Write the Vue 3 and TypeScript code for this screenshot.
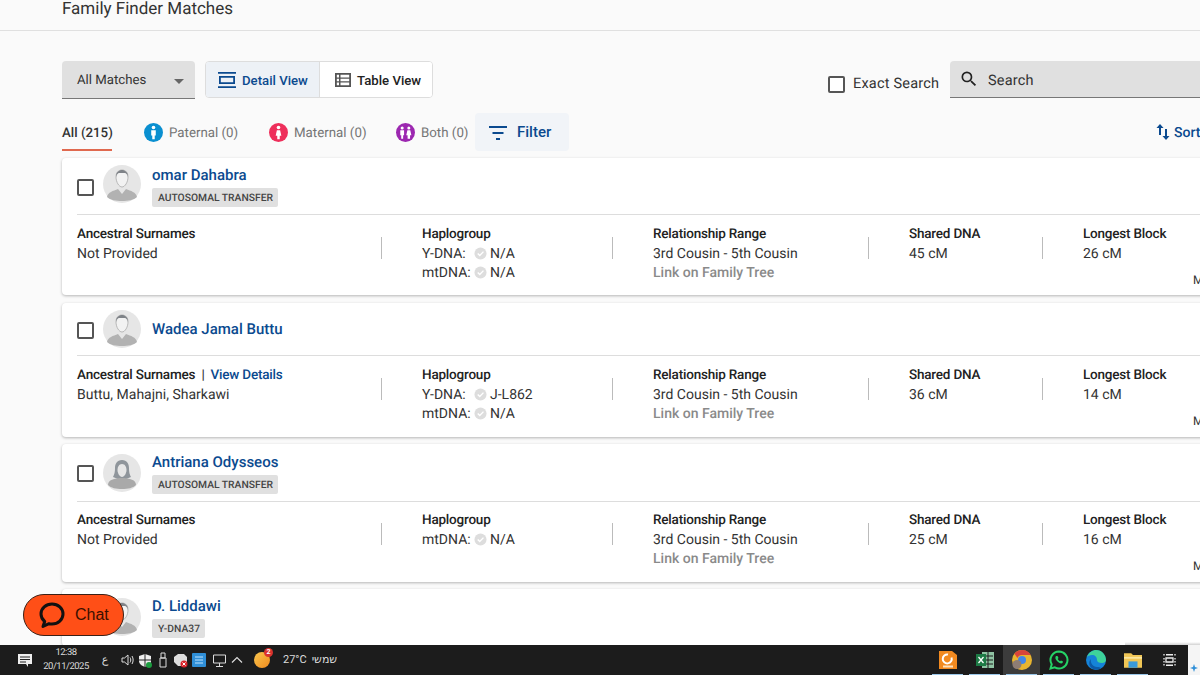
<template>
  <div class="page">
    <div class="main">
      <header class="title-bar">
        <h1>Family Finder Matches</h1>
      </header>

      <section class="toolbar">
        <div class="select">
          <span>All Matches</span>
          <i class="caret"></i>
        </div>
        <div class="view-toggle">
          <button class="view-btn active">
            <svg width="20" height="18" viewBox="0 0 20 18"><path d="M1 1h18v1.800H1zM1 15.200h18V17H1zM2 5h16v8H2zM3.800 6.800v4.400h12.400V6.800z" fill="#0b4a8f" fill-rule="evenodd" /></svg>
            Detail View
          </button>
          <button class="view-btn">
            <svg width="18" height="16" viewBox="0 0 18 16"><path d="M1 1h16v14H1zM2.800 2.800V5.500H5V2.800zM6.500 2.800V5.500h8.700V2.800zM2.800 6.800V9.300H5V6.800zM6.500 6.800V9.300h8.700V6.800zM2.800 10.600v2.600H5v-2.600zM6.500 10.600v2.600h8.700v-2.600z" fill="#555" fill-rule="evenodd" /></svg>
            Table View
          </button>
        </div>
        <label class="exact">
          <i class="box"></i>
          Exact Search
        </label>
        <div class="search">
          <svg width="20" height="20" viewBox="0 0 24 24"><path d="M15.500 14h-.79l-.28-.27A6.470 6.470 0 0 0 16 9.500 6.500 6.500 0 1 0 9.500 16c1.610 0 3.090-.59 4.230-1.570l.27.28v.79l5 4.990L20.490 19zm-6 0C7.010 14 5 11.990 5 9.500S7.010 5 9.500 5 14 7.010 14 9.500 11.990 14 9.500 14z" fill="#222" /></svg>
          <span>Search</span>
        </div>
      </section>

      <nav class="tabs">
        <div class="tab current">All (215)</div>
        <div class="tab">
          <svg width="19" height="19" viewBox="0 0 20 20"><circle cx="10" cy="10" r="10" fill="#0a8fd0" /><circle cx="10" cy="4.800" r="1.900" fill="#fff" /><path d="M7.600 7.500h4.800v5.700h-1.100V17H8.700v-3.800H7.600z" fill="#fff" /></svg>
          Paternal (0)
        </div>
        <div class="tab">
          <svg width="19" height="19" viewBox="0 0 20 20"><circle cx="10" cy="10" r="10" fill="#ee2f5b" /><circle cx="10" cy="4.800" r="1.900" fill="#fff" /><path d="M8.300 7.500h3.400l1.300 6h-1.700V17H8.700v-3.500H7z" fill="#fff" /></svg>
          Maternal (0)
        </div>
        <div class="tab">
          <svg width="19" height="19" viewBox="0 0 20 20"><circle cx="10" cy="10" r="10" fill="#9c27b0" /><circle cx="6.500" cy="5.300" r="1.600" fill="#fff" /><circle cx="13.500" cy="5.300" r="1.600" fill="#fff" /><path d="M4.500 7.500h4v5.300h-1V16.500h-2v-3.700h-1zM12 7.500h3l1.200 5.300h-1.400v3.700h-2.600v-3.700h-1.400z" fill="#fff" /></svg>
          Both (0)
        </div>
        <button class="filter">
          <svg width="20" height="14" viewBox="0 0 20 14"><path d="M1 0h18v2H1zM4.500 6h11v2h-11zM8 12h4v2H8z" fill="#0b4a8f" /></svg>
          Filter
        </button>
        <div class="sort">
          <svg width="16" height="18" viewBox="0 0 16 18"><path d="M5 1 1.500 5H4v7h2V5h2.500zM11 17l3.500-4H12V6h-2v7H7.500z" fill="#0b4a8f" /></svg>
          Sort
        </div>
      </nav>

      <section class="list">
        <article v-for="m in matches" :key="m.name" class="card" :class="m.size">
          <div class="card-head">
            <i class="box"></i>
            <svg class="avatar" width="38" height="38" viewBox="0 0 38 38">
              <circle cx="19" cy="19" r="19" fill="#e6e6e6" />
              <template v-if="m.female">
                <path d="M19 6c-5 0-7 4-7 8 0 5-1 7-2 9l5 2h8l5-2c-1-2-2-4-2-9 0-4-2-8-7-8z" fill="#8f959b" />
                <path d="M19 10c-3 0-4.500 3-4.500 6s2 7 4.500 7 4.500-4 4.500-7-1.500-6-4.500-6z" fill="#e6e6e6" />
                <path d="M5 31c0-5 6-7 14-7s14 2 14 7c-3 3-8 4-14 4S8 34 5 31z" fill="#a9a9a9" />
              </template>
              <template v-else>
                <path d="M19 5c-4 0-6 3-6 7 0 5 3 10 6 10s6-5 6-10c0-4-2-7-6-7z" fill="#f2f2f2" stroke="#aaa" stroke-width=".8" />
                <path d="M13 12c0-5 3-7 6-7s6 2 6 7c-1-3-2-4-3-4h-6c-1 0-2 1-3 4z" fill="#7f8388" />
                <path d="M4 32c1-5 6-6 11-8l4 5 4-5c5 2 10 3 11 8-3 3-9 4-15 4S7 35 4 32z" fill="#b2b2b2" />
              </template>
            </svg>
            <div class="who">
              <a class="name">{{ m.name }}</a>
              <span v-if="m.badge" class="badge">{{ m.badge }}</span>
            </div>
          </div>

          <div v-if="m.details" class="details">
            <div class="cell c1">
              <div class="label">
                Ancestral Surnames
                <span v-if="m.viewDetails" class="view-details"><i>|</i>View Details</span>
              </div>
              <div>{{ m.surnames }}</div>
            </div>
            <i class="sep"></i>
            <div class="cell c2">
              <div class="label">Haplogroup</div>
              <div v-for="h in m.haplo" :key="h.type" class="haplo">
                <span class="htype">{{ h.type }}:</span>
                <svg width="13" height="13" viewBox="0 0 14 14"><circle cx="7" cy="7" r="6.500" fill="#ddd" /><path d="m4 7 2.200 2.200L10.200 5" fill="none" stroke="#fff" stroke-width="1.500" /></svg>
                <span>{{ h.value }}</span>
              </div>
            </div>
            <i class="sep"></i>
            <div class="cell c3">
              <div class="label">Relationship Range</div>
              <div>3rd Cousin - 5th Cousin</div>
              <div class="tree">Link on Family Tree</div>
            </div>
            <i class="sep"></i>
            <div class="cell c4">
              <div class="label">Shared DNA</div>
              <div>{{ m.shared }}</div>
            </div>
            <i class="sep"></i>
            <div class="cell c5">
              <div class="label">Longest Block</div>
              <div>{{ m.longest }}</div>
              <div class="more">More</div>
            </div>
          </div>
        </article>
      </section>
    </div>

    <button class="chat">
      <svg width="28" height="28" viewBox="0 0 28 28"><path d="M14 3C7.900 3 3 7.500 3 13c0 3 1.400 5.600 3.700 7.500L5 25.500l6-2.800c1 .2 2 .3 3 .3 6.100 0 11-4.500 11-10S20.100 3 14 3z" fill="none" stroke="#111" stroke-width="3" stroke-linejoin="round" /></svg>
      Chat
    </button>

    <footer class="taskbar">
      <div class="tray">
        <svg class="notes" width="16" height="16" viewBox="0 0 16 16"><path d="M1 2h14v10h-4v3l-2-3H1z" fill="#eee" /><path d="M3 5h10M3 7.500h10M3 10h6" stroke="#222" stroke-width="1" /></svg>
        <div class="clock">
          <span>12:38</span>
          <span>20/11/2025</span>
        </div>
        <span class="lang">ع</span>
        <div class="tray-icons">
          <svg width="13" height="14" viewBox="0 0 13 14"><path d="M1 5h2.500L7 2v10L3.500 9H1z" fill="none" stroke="#ddd" /><path d="M9 4.500c1 1.500 1 3.500 0 5M11 3c1.500 2.500 1.500 5.500 0 8" fill="none" stroke="#ddd" /></svg>
          <svg width="14" height="15" viewBox="0 0 14 15"><path d="M7 1l6 2v5c0 3-3 5-6 6-3-1-6-3-6-6V3z" fill="#eee" /><path d="M1 7h12M7 1v13" stroke="#222" /><circle cx="11" cy="12" r="3" fill="#1a9c3e" /></svg>
          <svg width="12" height="16" viewBox="0 0 12 16"><path d="M3 6h6v9H3zM4 1h4v5H4z" fill="none" stroke="#ddd" /></svg>
          <svg width="15" height="15" viewBox="0 0 15 15"><path d="M1 4l4-3h6l3 3v5l-4 4H5L1 9z" fill="#ddd" /><circle cx="11" cy="11" r="3.500" fill="#d8232a" /><path d="m9.500 9.500 3 3m0-3-3 3" stroke="#fff" /></svg>
          <svg width="14" height="14" viewBox="0 0 14 14"><rect width="14" height="14" rx="1" fill="#2f8fd8" /><path d="M3 4h8M3 7h8M3 10h8" stroke="#bfe3ff" /></svg>
          <svg width="16" height="15" viewBox="0 0 16 15"><path d="M2.500 2h12v8h-12zM8.500 10v3M5 13.500h7" fill="none" stroke="#ddd" /></svg>
          <svg width="12" height="8" viewBox="0 0 12 8"><path d="M1 6.500 6 1.500l5 5" fill="none" stroke="#ddd" stroke-width="1.200" /></svg>
        </div>
        <div class="weather">
          <span class="sun"><b>2</b></span>
          <span>27°C</span>
          <span class="he">שמשי</span>
        </div>
      </div>

      <div class="apps">
        <span class="app"><svg width="18" height="20" viewBox="0 0 18 20"><path d="M0 1h13l5 4v14H0z" fill="#f28a20" /><path d="M12.500 7.500A4.500 4.500 0 1 1 9 4.500" fill="none" stroke="#fff" stroke-width="2" /><rect x="4" y="15.500" width="10" height="2" fill="#ffe2bd" /></svg></span>
        <span class="app"><svg width="20" height="20" viewBox="0 0 20 20"><rect x="7" y="2" width="12" height="16" fill="#8fc3a3" /><path d="M10 6h8M10 10h8M10 14h8M13 2v16" stroke="#1d1d1d" /><rect x="1" y="4" width="10" height="12" fill="#1d7a45" /><path d="m3.500 7 5 6m0-6-5 6" stroke="#fff" stroke-width="1.300" /></svg></span>
        <span class="app on"><svg width="20" height="20" viewBox="0 0 20 20"><circle cx="10" cy="10" r="10" fill="#e8b52f" /><path d="M10 0a10 10 0 0 1 8.700 5H10a5 5 0 0 0-4.600 3L2.300 3.600A10 10 0 0 1 10 0z" fill="#d9443a" /><circle cx="10" cy="10" r="4" fill="#4286e8" /><circle cx="5" cy="14.500" r="4.500" fill="#8e7d74" /></svg></span>
        <span class="app"><svg width="20" height="20" viewBox="0 0 20 20"><path d="M10 1.500a8.500 8.500 0 0 0-7.300 12.800L1.500 18.500l4.300-1.100A8.500 8.500 0 1 0 10 1.500z" fill="none" stroke="#25d366" stroke-width="2" /><path d="M7 6c-1 1-1 3 1 5s4 3 5.500 2l.5-1.500-2-1-1 .8c-1-.5-1.800-1.300-2.300-2.300l.8-1-1-2z" fill="#25d366" /></svg></span>
        <span class="app"><svg width="20" height="20" viewBox="0 0 20 20"><circle cx="10" cy="10" r="10" fill="#1583d8" /><path d="M1 7c2-5 6-7 9-7 6 0 10 5 10 10 0 2-2 3-4 3-3 0-5-1-5-3 0-3-2-5-5-5S2 6 1 7z" fill="#3ed29a" /><path d="M7 19c-4-2-5-7-2-10-1 4 2 8 6 8 2 0 3 0 4 1-2 2-5 2-8 1z" fill="#0c5aa8" /></svg></span>
        <span class="app"><svg width="18" height="17" viewBox="0 0 20 18"><path d="M0 1h8l2 2h10v14H0z" fill="#f0c656" /><rect x="0" y="5" width="20" height="2" fill="#fbe7a0" /><rect x="5" y="10" width="10" height="7" fill="#3a9ad9" /></svg></span>
        <span class="app plain"><svg width="13" height="12" viewBox="0 0 13 12"><path d="M3 .75h7M3 4h7v4H3zM3 11.250h7M1 0v1.500M1 4v1.500M1 7v1.500M1 10v1.500M12 0v1.500M12 4v1.500M12 7v1.500M12 10v1.500" fill="none" stroke="#eee" stroke-width="1.300" /></svg></span>
      </div>

      <div class="corner"><svg width="8" height="8" viewBox="0 0 8 8"><path d="M4 0l1 3 3 1-3 1-1 3-1-3-3-1 3-1z" fill="#2f8fd8" /></svg></div>
    </footer>
  </div>
</template>

<script setup lang="ts">
interface Haplo {
  type: string
  value: string
}

interface Match {
  name: string
  badge?: string
  size: string
  details: boolean
  viewDetails?: boolean
  surnames?: string
  haplo?: Haplo[]
  shared?: string
  longest?: string
  female?: boolean
}

const matches: Match[] = [
  {
    name: 'omar Dahabra',
    badge: 'AUTOSOMAL TRANSFER',
    size: 'first',
    details: true,
    surnames: 'Not Provided',
    haplo: [
      { type: 'Y-DNA', value: 'N/A' },
      { type: 'mtDNA', value: 'N/A' },
    ],
    shared: '45 cM',
    longest: '26 cM',
  },
  {
    name: 'Wadea Jamal Buttu',
    size: 'second',
    details: true,
    viewDetails: true,
    surnames: 'Buttu, Mahajni, Sharkawi',
    haplo: [
      { type: 'Y-DNA', value: 'J-L862' },
      { type: 'mtDNA', value: 'N/A' },
    ],
    shared: '36 cM',
    longest: '14 cM',
  },
  {
    name: 'Antriana Odysseos',
    badge: 'AUTOSOMAL TRANSFER',
    size: 'third',
    details: true,
    female: true,
    surnames: 'Not Provided',
    haplo: [{ type: 'mtDNA', value: 'N/A' }],
    shared: '25 cM',
    longest: '16 cM',
  },
  {
    name: 'D. Liddawi',
    badge: 'Y-DNA37',
    size: 'fourth',
    details: false,
  },
]
</script>

<style>
html,
body {
  margin: 0;
  background: #fafafa;
}
</style>

<style scoped>
.page {
  position: relative;
  display: flex;
  flex-direction: column;
  width: 1200px;
  height: 675px;
  overflow: hidden;
  font-family: Roboto, "Liberation Sans", sans-serif;
  font-size: 14px;
  line-height: 19.500px;
  color: #333;
  background: #fafafa;
  white-space: nowrap;
  text-rendering: geometricPrecision;
}

.main {
  flex: 1;
  min-height: 0;
  overflow: hidden;
}

.title-bar {
  height: 30px;
  border-bottom: 1px solid #e0e0e0;
  padding-left: 62px;
}

.title-bar h1 {
  margin: 0;
  font-size: 17px;
  font-weight: 400;
  line-height: 18px;
  color: #333;
}

.toolbar {
  display: flex;
  align-items: flex-start;
  height: 37px;
  margin-top: 30px;
  padding-left: 62px;
}

.select {
  box-sizing: border-box;
  display: flex;
  align-items: center;
  justify-content: space-between;
  flex: none;
  width: 133px;
  height: 38px;
  padding: 3px 11px 0 15px;
  background: #e0e0e0;
  border-bottom: 1px solid #777;
  border-radius: 4px 4px 0 0;
  font-size: 13.200px;
}

.caret {
  width: 0;
  height: 0;
  border-left: 5px solid transparent;
  border-right: 5px solid transparent;
  border-top: 5px solid #666;
}

.view-toggle {
  display: flex;
  flex: none;
  width: 228px;
  height: 37px;
  box-sizing: border-box;
  margin-left: 10px;
  border: 1px solid #ddd;
  border-radius: 4px;
  background: #fff;
  overflow: hidden;
}

.view-btn {
  display: flex;
  align-items: center;
  flex: 1;
  gap: 5px;
  padding: 2px 0 0 14px;
  border: 0;
  background: #fff;
  font: inherit;
  font-size: 13.200px;
  font-weight: 500;
  color: #222;
}

.view-btn.active {
  flex: none;
  width: 114px;
  padding-left: 11px;
  background: #edf1f6;
  color: #0b4a8f;
  border-right: 1px solid #ddd;
}

.view-btn svg {
  flex: none;
  margin-top: -2px;
}

.exact {
  display: flex;
  align-items: center;
  flex: none;
  gap: 8px;
  width: 122px;
  margin: 13px 0 0 395px;
  height: 20px;
  font-size: 14.500px;
  letter-spacing: 0.2px;
}

.box {
  display: block;
  box-sizing: border-box;
  flex: none;
  width: 17px;
  height: 17px;
  border: 2px solid #555;
  border-radius: 2px;
  background: #fff;
}

.search {
  box-sizing: border-box;
  display: flex;
  align-items: center;
  gap: 9px;
  flex: none;
  width: 260px;
  height: 37px;
  padding-left: 9px;
  background: #e0e0e0;
  border-bottom: 1px solid #777;
  border-radius: 4px 4px 0 0;
  font-size: 14.500px;
  letter-spacing: 0.2px;
}

.search span {
  padding-top: 3px;
}

.tabs {
  display: flex;
  align-items: flex-start;
  height: 38px;
  margin-top: 15px;
  padding-left: 62px;
}

.tab {
  display: flex;
  align-items: center;
  flex: none;
  gap: 6px;
  height: 38px;
  padding-top: 3px;
  box-sizing: border-box;
  font-size: 13.300px;
  color: #757575;
}

.tab svg {
  flex: none;
  margin-top: -2px;
}

.tab:nth-child(1) {
  width: 50px;
  margin-right: 32px;
}

.tab:nth-child(2) {
  width: 94px;
  margin-right: 31px;
}

.tab:nth-child(3) {
  width: 97px;
  margin-right: 30px;
}

.tab:nth-child(4) {
  width: 72px;
  margin-right: 7px;
}

.tab.current {
  padding-top: 5px;
  color: #333;
  font-weight: 500;
  border-bottom: 2px solid #e0694f;
}

.filter {
  display: flex;
  align-items: center;
  flex: none;
  gap: 9px;
  width: 94px;
  height: 38px;
  padding: 1px 0 0 13px;
  border: 0;
  border-radius: 4px;
  background: #f1f4f8;
  font: inherit;
  font-size: 15px;
  font-weight: 500;
  color: #0b4a8f;
}

.sort {
  display: flex;
  align-items: center;
  flex: none;
  gap: 3px;
  height: 38px;
  padding-top: 3px;
  box-sizing: border-box;
  margin-left: 586px;
  font-weight: 500;
  color: #0b4a8f;
}

.sort svg {
  margin-top: -4px;
}

.list {
  display: flex;
  flex-direction: column;
  gap: 7px;
  margin-top: 7px;
  padding-left: 62px;
}

.card {
  box-sizing: border-box;
  flex: none;
  width: 1200px;
  padding: 0 15px;
  background: #fff;
  border-radius: 4px;
  box-shadow: 0 1px 3px rgba(0, 0, 0, 0.28);
}

.card.first {
  height: 137px;
  margin-bottom: 1px;
}

.card.second {
  height: 134px;
}

.card.third {
  height: 138px;
}

.card-head {
  display: flex;
  align-items: center;
  box-sizing: border-box;
  height: 57px;
  border-bottom: 1px solid #ddd;
}

.second .card-head {
  height: 53px;
}

.third .card-head {
  height: 58px;
}

.card .card-head > .box {
  margin: 2px 9px 0 0;
}

.avatar {
  flex: none;
  margin-right: 11px;
}

.first .avatar {
  margin-top: -4px;
}

.who {
  display: flex;
  flex-direction: column;
  align-items: flex-start;
  gap: 3px;
}

.name {
  font-size: 15px;
  font-weight: 500;
  line-height: 20px;
  color: #0b4a8f;
}

.badge {
  padding: 0 5px 0 6px;
  height: 19px;
  line-height: 20px;
  font-size: 10.300px;
  font-weight: 500;
  color: #444;
  background: #e0e0e0;
  border-radius: 2px;
}

.details {
  display: flex;
  align-items: flex-start;
  padding-top: 10px;
}

.third .details {
  padding-top: 9px;
}

.cell {
  box-sizing: border-box;
  flex: none;
}

.c1 {
  width: 304px;
}

.c2 {
  width: 190px;
  margin-left: 40px;
}

.c3 {
  width: 215px;
  margin-left: 40px;
}

.c4 {
  width: 133px;
  margin-left: 40px;
}

.c5 {
  position: relative;
  width: 200px;
  margin-left: 40px;
}

.sep {
  flex: none;
  width: 1px;
  height: 22px;
  margin-top: 12px;
  background: #bbb;
}

.label {
  color: #222;
  font-size: 13.500px;
  font-weight: 500;
  letter-spacing: -0.2px;
}

.view-details {
  color: #0b4a8f;
}

.view-details i {
  margin: 0 6px 0 3px;
  font-style: normal;
  color: #333;
}

.haplo {
  display: flex;
  align-items: center;
  height: 19.500px;
}

.htype {
  width: 52px;
}

.haplo svg {
  margin: -2px 3px 0 0;
}

.tree {
  font-weight: 500;
  color: #8a8a8a;
}

.more {
  position: absolute;
  left: 110px;
  top: 48px;
  font-size: 12px;
  line-height: 14px;
  color: #333;
}

.chat {
  position: absolute;
  left: 23px;
  top: 594px;
  box-sizing: border-box;
  display: flex;
  align-items: center;
  gap: 9px;
  width: 101px;
  height: 42px;
  padding: 0 0 0 14px;
  border: 1px solid #3b2016;
  border-radius: 21px;
  background: #ff4f17;
  font-family: "Liberation Sans", sans-serif;
  font-size: 16px;
  color: #3a0f00;
}

.taskbar {
  position: relative;
  flex: none;
  display: flex;
  align-items: center;
  height: 30px;
  background: #1c1c1c;
  color: #ddd;
}

.tray {
  display: flex;
  align-items: center;
  padding-left: 17px;
}

.notes {
  flex: none;
  margin-right: 10px;
}

.clock {
  display: flex;
  flex-direction: column;
  align-items: center;
  flex: none;
  width: 46px;
  margin-right: 10px;
  font-size: 9.500px;
  line-height: 14px;
  letter-spacing: -0.5px;
}

.lang {
  width: 12px;
  font-size: 11px;
  text-align: center;
}

.tray-icons {
  display: flex;
  align-items: center;
  justify-content: space-between;
  flex: none;
  width: 122px;
  margin: 0 11px 0 10px;
}

.weather {
  display: flex;
  align-items: center;
  flex: none;
  gap: 5px;
  font-size: 11px;
}

.sun {
  position: relative;
  width: 16px;
  height: 16px;
  margin-right: 8px;
  border-radius: 50%;
  background: linear-gradient(135deg, #f9c74f, #f08a1d);
}

.sun b {
  position: absolute;
  right: -3px;
  top: -4px;
  width: 9px;
  height: 9px;
  border-radius: 50%;
  background: #d9322e;
  color: #fff;
  font-size: 7px;
  line-height: 9px;
  text-align: center;
}

.he {
  font-family: "DejaVu Sans", sans-serif;
  font-size: 11px;
}

.apps {
  display: flex;
  margin-left: auto;
  margin-right: 12px;
}

.app {
  position: relative;
  display: flex;
  align-items: center;
  justify-content: center;
  width: 37px;
  height: 30px;
}

.app::after {
  content: "";
  position: absolute;
  left: 3px;
  right: 3px;
  bottom: 0;
  height: 1px;
  background: #9cc8ea;
}

.app.plain::after {
  display: none;
}

.app.on {
  background: #3c3c3c;
}

.corner {
  position: absolute;
  right: 0;
  top: 0;
  display: flex;
  align-items: flex-end;
  justify-content: center;
  width: 12px;
  height: 30px;
  padding-bottom: 3px;
  box-sizing: border-box;
  background: #f5f5f5;
}

.corner::before {
  content: "";
  position: absolute;
  right: 0;
  top: -3px;
  width: 75px;
  height: 3px;
  background: linear-gradient(to top, rgba(0, 0, 0, 0.18), transparent);
}
</style>
